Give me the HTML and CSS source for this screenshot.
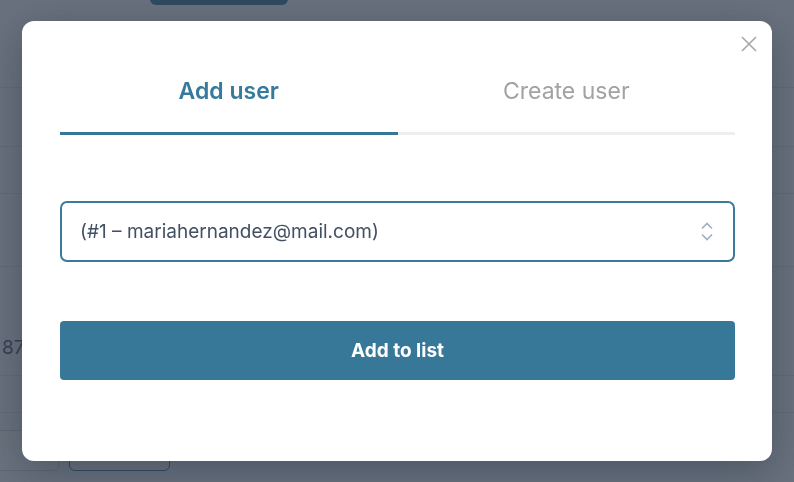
FILE: index.html
```html
<!DOCTYPE html>
<html lang="en">
<head>
    <meta charset="UTF-8">
    <meta name="viewport" content="width=device-width, initial-scale=1.0">
    <title>Add user</title>
    <link rel="stylesheet" href="styles.css">
</head>
<body>
    <div class="page">
        <div class="topbar">
            <button class="top-btn"></button>
        </div>
        <div class="row row-1"></div>
        <div class="row row-2"></div>
        <div class="row row-3"></div>
        <div class="row row-4"></div>
        <div class="row row-5"><span class="cell-num">87</span></div>
        <div class="row row-6"></div>
        <div class="footer-actions">
            <button class="ghost-btn"></button>
            <button class="outline-btn"></button>
        </div>
    </div>

    <div class="overlay">
        <div class="modal">
            <button class="close" aria-label="Close">
                <svg width="16" height="16" viewBox="0 0 16 16">
                    <path d="M1 1 L15 15 M15 1 L1 15" stroke="#a8a8a8" stroke-width="1.6" fill="none"/>
                </svg>
            </button>

            <div class="tabs">
                <button class="tab active">Add user</button>
                <button class="tab">Create user</button>
            </div>

            <div class="select-wrap">
                <select class="user-select">
                    <option>(#1 – mariahernandez@mail.com)</option>
                </select>
                <svg class="chevron" width="12" height="20" viewBox="0 0 12 20">
                    <path d="M1 6.5 L6 1.5 L11 6.5" stroke="#a3adbf" stroke-width="1.6" fill="none"/>
                    <path d="M1 12.5 L6 17.5 L11 12.5" stroke="#a3adbf" stroke-width="1.6" fill="none"/>
                </svg>
            </div>

            <button class="primary">Add to list</button>
        </div>
    </div>
</body>
</html>
```

FILE: styles.css
```css
body {
    margin: 0;
    font-family: Inter, "Noto Sans", sans-serif;
    background-color: #f7fafc;
    overflow: hidden;
}
.page {
    height: 482px;
    overflow: hidden;
}
.topbar {
    display: flex;
    height: 5px;
}
.top-btn {
    margin: -35px 0 0 150px;
    width: 138px;
    height: 40px;
    border: none;
    border-radius: 6px;
    background-color: #377899;
}
.row {
    border-bottom: 1px solid #dfe3ea;
}
.row-1 { height: 82px; }
.row-2 { height: 58px; }
.row-3 { height: 46px; }
.row-4 { height: 72px; }
.row-5 {
    height: 109px;
    box-sizing: border-box;
    padding: 69px 0 0 2px;
}
.row-6 { height: 36px; }
.cell-num {
    font-size: 19px;
    color: #4a5568;
}
.footer-actions {
    display: flex;
    gap: 10px;
    margin-top: 17px;
}
.ghost-btn,
.outline-btn {
    height: 41px;
    border-radius: 6px;
    background: white;
}
.ghost-btn {
    margin-left: -40px;
    width: 99px;
    border: 1px solid #cfd6df;
}
.outline-btn {
    width: 101px;
    border: 1px solid #377899;
}

.overlay {
    position: fixed;
    inset: 0;
    display: flex;
    align-items: center;
    justify-content: center;
    background-color: rgba(45, 56, 73, 0.71);
}
.modal {
    position: relative;
    width: 750px;
    box-sizing: border-box;
    padding: 56px 37px 81px 38px;
    background: white;
    border-radius: 12px;
    box-shadow: 0 10px 40px rgba(25, 35, 50, 0.35);
}
.close {
    position: absolute;
    top: 15px;
    right: 15px;
    padding: 0;
    border: none;
    background: none;
    line-height: 0;
    cursor: pointer;
}
.tabs {
    display: flex;
}
.tab {
    flex: 1;
    padding: 0 0 27px;
    border: none;
    border-bottom: 3px solid #eeeeee;
    background: none;
    font-family: Inter, "Noto Sans", sans-serif;
    font-size: 23px;
    line-height: 28px;
    font-weight: 400;
    color: #a2a2a2;
    cursor: pointer;
}
.tab.active {
    font-weight: 600;
    color: #377a9d;
    border-bottom-color: #377799;
}
.select-wrap {
    position: relative;
    margin-top: 66px;
}
.user-select {
    display: block;
    width: 100%;
    height: 61px;
    padding: 0 40px 0 18px;
    border: 2px solid #3a7b9c;
    border-radius: 7px;
    background: white;
    font-family: Inter, "Noto Sans", sans-serif;
    font-size: 19px;
    color: #434f63;
    appearance: none;
    -webkit-appearance: none;
    outline: none;
}
.chevron {
    position: absolute;
    right: 22px;
    top: 21px;
}
.primary {
    display: block;
    width: 100%;
    height: 59px;
    margin-top: 59px;
    border: none;
    border-radius: 4px;
    background-color: #377899;
    color: white;
    font-family: Inter, "Noto Sans", sans-serif;
    font-size: 19px;
    font-weight: 700;
    cursor: pointer;
}
```
